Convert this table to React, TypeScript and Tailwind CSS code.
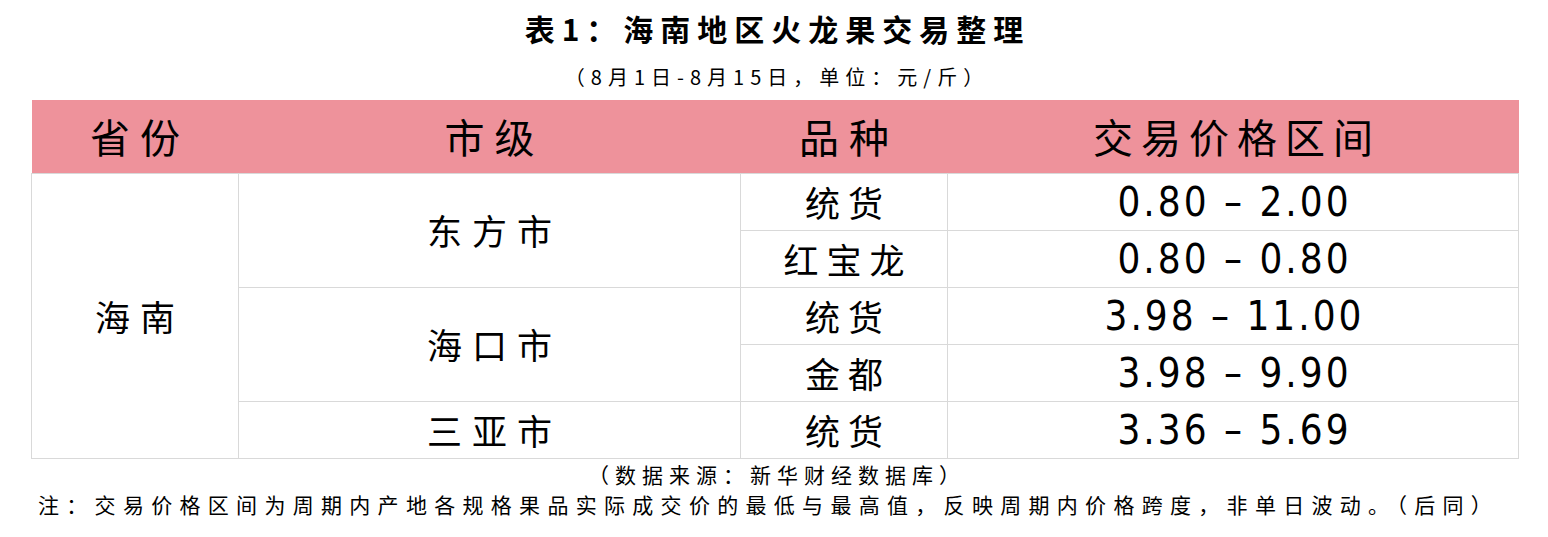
const cjk = "font-['Noto_Sans_CJK_SC',sans-serif]";
const num = "font-['DejaVu_Sans','Noto_Sans_CJK_SC',sans-serif] [font-stretch:condensed]";

type Row = { variety: string; low: string; high: string };

const cities: { name: string; rows: Row[] }[] = [
  {
    name: "东方市",
    rows: [
      { variety: "统货", low: "0.80", high: "2.00" },
      { variety: "红宝龙", low: "0.80", high: "0.80" },
    ],
  },
  {
    name: "海口市",
    rows: [
      { variety: "统货", low: "3.98", high: "11.00" },
      { variety: "金都", low: "3.98", high: "9.90" },
    ],
  },
  {
    name: "三亚市",
    rows: [{ variety: "统货", low: "3.36", high: "5.69" }],
  },
];

const cell = "border border-[#d9d9d9] text-center text-black p-0";

export default function App() {
  const total = cities.reduce((n, c) => n + c.rows.length, 0);
  return (
    <div className={`w-[1548px] h-[537px] bg-white ${cjk} text-black`}>
      <h1 className="pt-[8px] h-[62px] pl-[7px] text-center text-[30px] font-semibold leading-[40px] tracking-[7px]">
        表1：海南地区火龙果交易整理
      </h1>
      <p className="h-[38px] pl-[6px] text-center text-[20px] leading-[30px] tracking-[6px]">
        （8月1日-8月15日，单位：元/斤）
      </p>
      <div className="px-[31px]">
        <table className="w-[1487px] border-collapse table-fixed">
          <colgroup>
            <col className="w-[207px]" />
            <col className="w-[502px]" />
            <col className="w-[207px]" />
            <col className="w-[571px]" />
          </colgroup>
          <thead>
            <tr className="h-[73px] bg-[#ee929b]">
              <th className="p-0 pl-[10px] text-[40px] leading-[50px] font-normal tracking-[10px]">省份</th>
              <th className="p-0 pl-[10px] text-[40px] leading-[50px] font-normal tracking-[10px]">市级</th>
              <th className="p-0 pl-[10px] text-[40px] leading-[50px] font-normal tracking-[10px]">品种</th>
              <th className="p-0 pl-[8px] text-[40px] leading-[50px] font-normal tracking-[8px]">交易价格区间</th>
            </tr>
          </thead>
          <tbody>
            {cities.map((c, ci) =>
              c.rows.map((r, ri) => (
                <tr key={`${ci}-${ri}`} className="h-[57px]">
                  {ci === 0 && ri === 0 && (
                    <td rowSpan={total} className={`${cell} pl-[10px] text-[35px] leading-[44px] tracking-[10px]`}>
                      海南
                    </td>
                  )}
                  {ri === 0 && (
                    <td rowSpan={c.rows.length} className={`${cell} pl-[10px] text-[35px] leading-[44px] tracking-[10px]`}>
                      {c.name}
                    </td>
                  )}
                  <td className={`${cell} pl-[8px] text-[35px] leading-[44px] tracking-[8px]`}>{r.variety}</td>
                  <td className={`${cell} ${num} pl-[3px] text-[40px] leading-[44px] tracking-[3px]`}>
                    {r.low} – {r.high}
                  </td>
                </tr>
              ))
            )}
          </tbody>
        </table>
      </div>
      <p className="pl-[6px] text-center text-[21px] leading-[30px] tracking-[6px]">
        （数据来源：新华财经数据库）
      </p>
      <p className="pl-[38px] text-[21px] leading-[30px] tracking-[7.3px] whitespace-nowrap">
        注：交易价格区间为周期内产地各规格果品实际成交价的最低与最高值，反映周期内价格跨度，非单日波动。（后同）
      </p>
    </div>
  );
}
